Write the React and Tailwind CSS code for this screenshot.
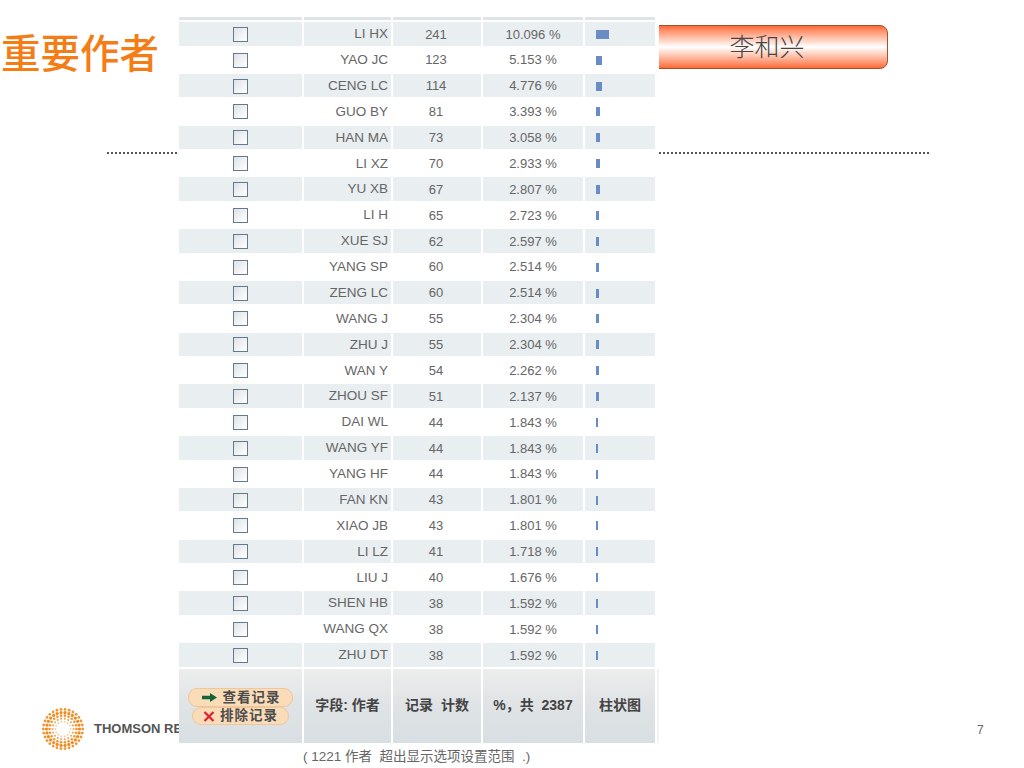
const FONT = "font-['Liberation_Sans','Noto_Sans_CJK_SC',sans-serif]";

const rows = [
  ['LI HX', 241, '10.096'], ['YAO JC', 123, '5.153'], ['CENG LC', 114, '4.776'], ['GUO BY', 81, '3.393'],
  ['HAN MA', 73, '3.058'], ['LI XZ', 70, '2.933'], ['YU XB', 67, '2.807'], ['LI H', 65, '2.723'],
  ['XUE SJ', 62, '2.597'], ['YANG SP', 60, '2.514'], ['ZENG LC', 60, '2.514'], ['WANG J', 55, '2.304'],
  ['ZHU J', 55, '2.304'], ['WAN Y', 54, '2.262'], ['ZHOU SF', 51, '2.137'], ['DAI WL', 44, '1.843'],
  ['WANG YF', 44, '1.843'], ['YANG HF', 44, '1.843'], ['FAN KN', 43, '1.801'], ['XIAO JB', 43, '1.801'],
  ['LI LZ', 41, '1.718'], ['LIU J', 40, '1.676'], ['SHEN HB', 38, '1.592'], ['WANG QX', 38, '1.592'],
  ['ZHU DT', 38, '1.592'],
];

const gridCols = 'grid grid-cols-[123px_87px_88px_100px_70px] gap-x-[2px]';
const headerBg = 'bg-gradient-to-b from-[#ededed] via-[#dfe3e5] to-[#d8dfe2]';

function Logo() {
  const rings = [
    { r: 7.5, n: 14, s: 0.8, o: 0.6 },
    { r: 10.5, n: 18, s: 1.05, o: 0.75 },
    { r: 13.5, n: 22, s: 1.3, o: 0.9 },
    { r: 16.5, n: 26, s: 1.6, o: 1 },
    { r: 19.7, n: 30, s: 1.4, o: 0.9 },
  ];
  return (
    <svg width="44" height="44" viewBox="-22 -22 44 44">
      {rings.map((ring) =>
        Array.from({ length: ring.n }, (_, i) => {
          const a = (i / ring.n) * Math.PI * 2;
          return (
            <circle
              key={`${ring.r}-${i}`}
              cx={Math.cos(a) * ring.r}
              cy={Math.sin(a) * ring.r}
              r={ring.s}
              fill="#f08a1d"
              opacity={ring.o}
            />
          );
        })
      )}
    </svg>
  );
}

function Checkbox() {
  return <div className="w-[15px] h-[15px] border-[1.5px] border-[#66798f] bg-gradient-to-br from-[#dfe3e6] to-white" />;
}

function Row({ name, count, pct, shaded }) {
  const cell = `flex items-center h-[23.5px] pt-[1px] ${shaded ? 'bg-[#e9eef1]' : ''}`;
  return (
    <div className={`${gridCols} h-[25.875px] text-[13px] text-[#666]`}>
      <div className={`${cell} justify-center`}><Checkbox /></div>
      <div className={`${cell} justify-end pr-[3px] text-[13.5px]`}>{name}</div>
      <div className={`${cell} justify-center pr-[2px]`}>{count}</div>
      <div className={`${cell} justify-center`}>{pct} %</div>
      <div className={`${cell} pl-[11px]`}>
        <div className="h-[9px] bg-[#6a8cc4]" style={{ width: `${Math.max(2, pct * 1.25)}px` }} />
      </div>
    </div>
  );
}

function HeaderCell({ children }) {
  return (
    <div className={`flex items-center justify-center h-[74px] ${headerBg} text-[14px] font-bold text-[#444] whitespace-pre`}>
      {children}
    </div>
  );
}

function ActionButton({ icon, label, className }) {
  return (
    <div className={`flex items-center justify-center gap-[5px] rounded-[9px] border border-[#eec79a] bg-[#fbdcb8] text-[13.5px] font-bold tracking-[1px] text-[#4d4d4d] ${className}`}>
      {icon}
      <span>{label}</span>
    </div>
  );
}

export default function App() {
  return (
    <div className={`relative w-[1024px] h-[768px] overflow-hidden bg-white ${FONT}`}>
      {/* slide background */}
      <h1 className="absolute left-[1px] top-[26px] text-[39.5px] leading-[56px] font-medium text-[#f47d16]">重要作者</h1>
      <div className="absolute left-[560px] top-[25px] w-[328px] h-[44px] flex items-center justify-center pl-[86px] pt-[2px] rounded-[8px] border border-[#a5522a] bg-gradient-to-b from-[#fb6a36] via-white to-[#fb6a36] text-[25px] font-light text-[#444]">
        李和兴
      </div>
      <div className="absolute left-[107px] top-[152px] w-[822px] border-t-2 border-dotted border-[#555]" />
      <div className="absolute left-[41px] top-[707px] flex items-center gap-[9px]">
        <Logo />
        <span className="text-[13px] font-bold text-[#555] whitespace-nowrap">THOMSON REUTERS</span>
      </div>
      <div className="absolute left-[977px] top-[722px] text-xs text-[#666]">7</div>
      <div className="absolute left-[303px] top-[747px] text-[13.5px] text-[#666] whitespace-pre">( 1221 作者  超出显示选项设置范围  .)</div>

      {/* table screenshot on top */}
      <div className="absolute left-[179px] top-[17px] w-[480px] bg-white">
        <div className={`${gridCols} h-[5px]`}>
          {[0, 1, 2, 3, 4].map((i) => <div key={i} className="h-[3px] bg-[#dfe4e7]" />)}
        </div>
        {rows.map(([name, count, pct], i) => (
          <Row key={name + i} name={name} count={count} pct={pct} shaded={i % 2 === 0} />
        ))}
        <div className="grid grid-cols-[123px_87px_88px_100px_70px_2px] gap-x-[2px]">
          <div className={`flex flex-col justify-center h-[74px] pl-[9px] pt-[2px] ${headerBg}`}>
            <ActionButton
              className="w-[105px] h-[19px]"
              label="查看记录"
              icon={<svg width="17" height="11" viewBox="0 0 17 11"><path d="M1 3.8h8V1l7 4.5-7 4.5V7.2H1z" fill="#14663a" /></svg>}
            />
            <ActionButton
              className="w-[97px] h-[18px] ml-[4px]"
              label="排除记录"
              icon={<svg width="12" height="11" viewBox="0 0 12 11"><path d="M1.5 1l9 9M10.5 1l-9 9" stroke="#e02030" strokeWidth="2.2" /></svg>}
            />
          </div>
          <HeaderCell>字段: 作者</HeaderCell>
          <HeaderCell>记录  计数</HeaderCell>
          <HeaderCell>%，共  2387</HeaderCell>
          <HeaderCell>柱状图</HeaderCell>
          <div className="h-[74px] bg-[#f0f2f3]" />
        </div>
      </div>
    </div>
  );
}
